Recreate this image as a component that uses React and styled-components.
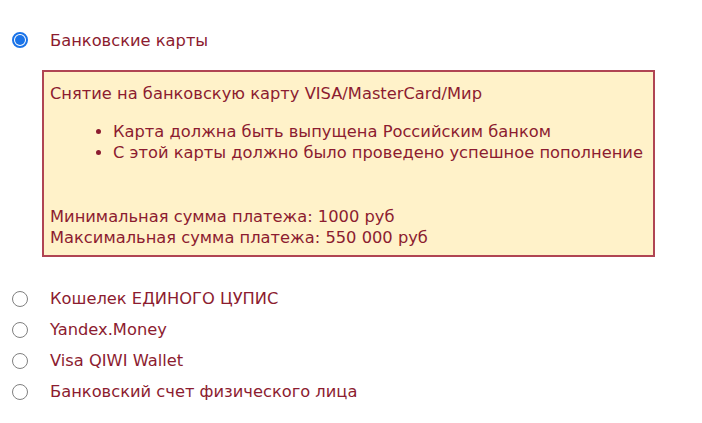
import React from "react";
import styled, { createGlobalStyle } from "styled-components";

const Global = createGlobalStyle`
  html, body { margin: 0; padding: 0; background: #fff; }
  body { font-family: "DejaVu Sans", "Liberation Sans", sans-serif; }
`;

const Page = styled.div`
  padding: 28px 0 0 12px;
  width: 702px;
  height: 423px;
  box-sizing: border-box;
`;

const List = styled.div`
  display: flex;
  flex-direction: column;
`;

const Option = styled.label`
  display: flex;
  align-items: center;
  gap: 22px;
  height: ${(p) => p.$h || 31}px;
  color: #8c1c30;
  font-size: 16.3px;
  cursor: pointer;
`;

const Radio = styled.span`
  width: 16px;
  height: 16px;
  box-sizing: border-box;
  border-radius: 50%;
  flex: none;
  border: ${(p) => (p.$checked ? "2px solid #1a73e8" : "1.5px solid #808080")};
  background: #fff;
  display: flex;
  align-items: center;
  justify-content: center;
  &::after {
    content: "";
    display: ${(p) => (p.$checked ? "block" : "none")};
    width: 10px;
    height: 10px;
    border-radius: 50%;
    background: #1a73e8;
  }
`;

const InfoBox = styled.div`
  margin: 18px 0 26px 30px;
  width: 613px;
  height: 187px;
  box-sizing: border-box;
  border: 2px solid #b04553;
  background: #fff2c9;
  color: #8c1c30;
  font-size: 16.3px;
  line-height: 21.5px;
  padding: 11px 6px 10px;
`;

const Bullets = styled.ul`
  margin: 16px 0 42px;
  padding-left: 63px;
`;

const options = [
  "Кошелек ЕДИНОГО ЦУПИС",
  "Yandex.Money",
  "Visa QIWI Wallet",
  "Банковский счет физического лица",
];

export default function App() {
  return (
    <Page>
      <Global />
      <List>
        <Option $h={24}>
          <Radio $checked />
          Банковские карты
        </Option>
        <InfoBox>
          <div>Снятие на банковскую карту VISA/MasterCard/Мир</div>
          <Bullets>
            <li>Карта должна быть выпущена Российским банком</li>
            <li>С этой карты должно было проведено успешное пополнение</li>
          </Bullets>
          <div>Минимальная сумма платежа: 1000 руб</div>
          <div>Максимальная сумма платежа: 550 000 руб</div>
        </InfoBox>
        {options.map((o) => (
          <Option key={o}>
            <Radio />
            {o}
          </Option>
        ))}
      </List>
    </Page>
  );
}
